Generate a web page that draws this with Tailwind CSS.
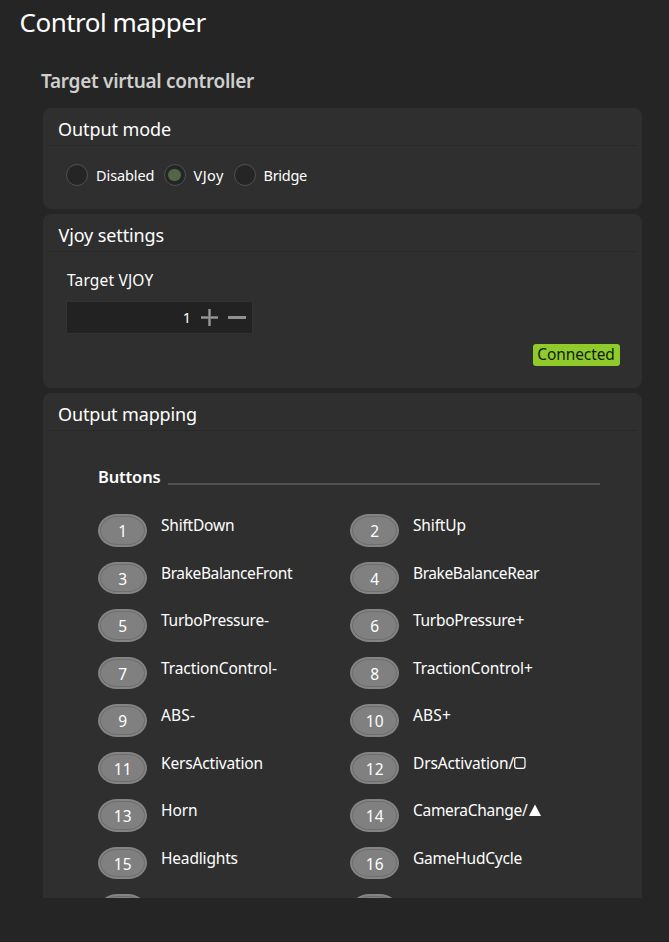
<!DOCTYPE html>
<html lang="en">
<head>
<meta charset="utf-8">
<title>Control mapper</title>
<script src="https://cdn.jsdelivr.net/npm/@tailwindcss/browser@4"></script>
</head>
<body class="h-[942px] overflow-hidden bg-[#252525] font-['Noto_Sans','Open_Sans',sans-serif] text-white">
<div class="flex h-[942px] flex-col border-b border-[#231f23]">
  <h1 class="pt-1 pl-[19.5px] text-[26px] leading-9 tracking-[-0.51px]">Control mapper</h1>
  <h2 class="mt-[27px] pl-[41px] text-[19px] leading-7 font-semibold tracking-[-0.29px] text-[#cfcfcf]">Target virtual controller</h2>

  <main class="mt-[13px] ml-[43px] flex h-[790px] w-[599px] flex-col gap-[5px] overflow-hidden">
    <section class="h-[101px] shrink-0 rounded-lg bg-[#2f2f2f] px-[5px]">
      <h3 class="h-[38px] border-b border-[#292929] pl-[10px] text-[18px] leading-[42px] tracking-[-0.08px]">Output mode</h3>
      <div class="flex pt-[18px] pl-[18px] text-[14.5px] leading-[22px]">
        <div class="flex w-[97.5px] gap-[8px]"><span class="size-[22px] rounded-full border border-[#505050] bg-[#252525]"></span><span class="tracking-[-0.1px]">Disabled</span></div>
        <div class="flex w-[70px] gap-[8px]"><span class="flex size-[22px] items-center justify-center rounded-full border border-[#505050] bg-[#252525]"><span class="size-[12.5px] rounded-full bg-[#526549]"></span></span><span class="tracking-[0.45px]">VJoy</span></div>
        <div class="flex gap-[8px]"><span class="size-[22px] rounded-full border border-[#505050] bg-[#252525]"></span><span class="tracking-[-0.28px]">Bridge</span></div>
      </div>
    </section>

    <section class="h-[174px] shrink-0 rounded-lg bg-[#2f2f2f] px-[5px]">
      <h3 class="h-[38px] border-b border-[#292929] pl-[10.5px] text-[18px] leading-[42px] tracking-[-0.12px]">Vjoy settings</h3>
      <div class="pt-[17px] pl-[19px] text-[15.5px] leading-[22px] tracking-[0.18px]">Target VJOY</div>
      <div class="mt-[10px] ml-[18px] flex h-[33px] w-[187px] items-center justify-end border border-[#333333] bg-[#222222] pr-[6px]">
        <span class="mr-[10px] text-[14.5px] leading-[33px]">1</span>
        <svg class="mr-[9px]" width="18" height="18" viewBox="0 0 18 18"><path d="M0 8.5H17M8.5 0V17" stroke="#747474" stroke-width="3"/><path d="M0 8.5H17M8.5 0V17" stroke="#969696" stroke-width="1"/></svg>
        <svg width="18" height="18" viewBox="0 0 18 18"><path d="M0 8.5H18" stroke="#909090" stroke-width="3"/></svg>
      </div>
      <div class="mt-[10px] mr-[17.5px] ml-auto h-[21.5px] w-[87px] rounded-[3px] bg-[#8ecb2b] text-center text-[15.5px] leading-[21px] tracking-[-0.11px] text-[#151b0b]">Connected</div>
    </section>

    <section class="h-[600px] shrink-0 rounded-t-lg bg-[#2f2f2f] px-[5px]">
      <h3 class="h-[38px] border-b border-[#292929] pl-[10px] text-[18px] leading-[42px] tracking-[-0.15px]">Output mapping</h3>
      <div class="flex pt-[34px] pl-[50px] text-[16.5px] leading-6 font-semibold tracking-[-0.17px]">
        <span class="w-[69.5px]">Buttons</span><span class="mt-[18px] h-[2px] w-[432px] bg-[#515151]"></span>
      </div>
      <div id="rows" class="grid grid-cols-[252px_252px] auto-rows-[47.5px] pt-[25.3px] pl-[50.4px] text-[15.5px]"></div>
    </section>
  </main>
</div>
<script>
const names = [
  ["ShiftDown", -.2], ["ShiftUp", -.14], ["BrakeBalanceFront", -.39], ["BrakeBalanceRear", -.41],
  ["TurboPressure-", -.25], ["TurboPressure+", -.29], ["TractionControl-", -.1], ["TractionControl+", -.1],
  ["ABS-", .17], ["ABS+", .17], ["KersActivation", -.17], ["DrsActivation/", -.13],
  ["Horn", -.09], ["CameraChange/", -.29], ["Headlights", -.17], ["GameHudCycle", -.22], ["", 0], ["", 0]
];
const glyphs = {
  11: '<svg class="mt-[5px]" width="12" height="12" viewBox="0 0 12 12"><rect x=".7" y=".7" width="10.3" height="10.6" rx="2" fill="none" stroke="#fff" stroke-width="1.2"/></svg>',
  13: '<svg class="mt-[5px] ml-[2px]" width="12" height="12" viewBox="0 0 12 12"><path d="M6 .5L12 12H0Z" fill="#fff"/></svg>'
};
document.getElementById('rows').innerHTML = names.map(([n, ls], i) => `
  <div class="flex">
    <span class="h-[32.7px] w-[48.6px] rounded-[20px/17px] bg-[#848484] p-[2px]"><span class="block h-[28.7px] w-[44.6px] rounded-[18px/15px] border border-[#6e6e6e] bg-[#808080] text-center leading-[28.5px]">${i < 16 ? i + 1 : ''}</span></span>
    <span class="ml-[14px] flex h-[22px] leading-[22px]"><span style="letter-spacing:${ls}px">${n}</span>${glyphs[i] || ''}</span>
  </div>`).join('');
</script>
</body>
</html>
